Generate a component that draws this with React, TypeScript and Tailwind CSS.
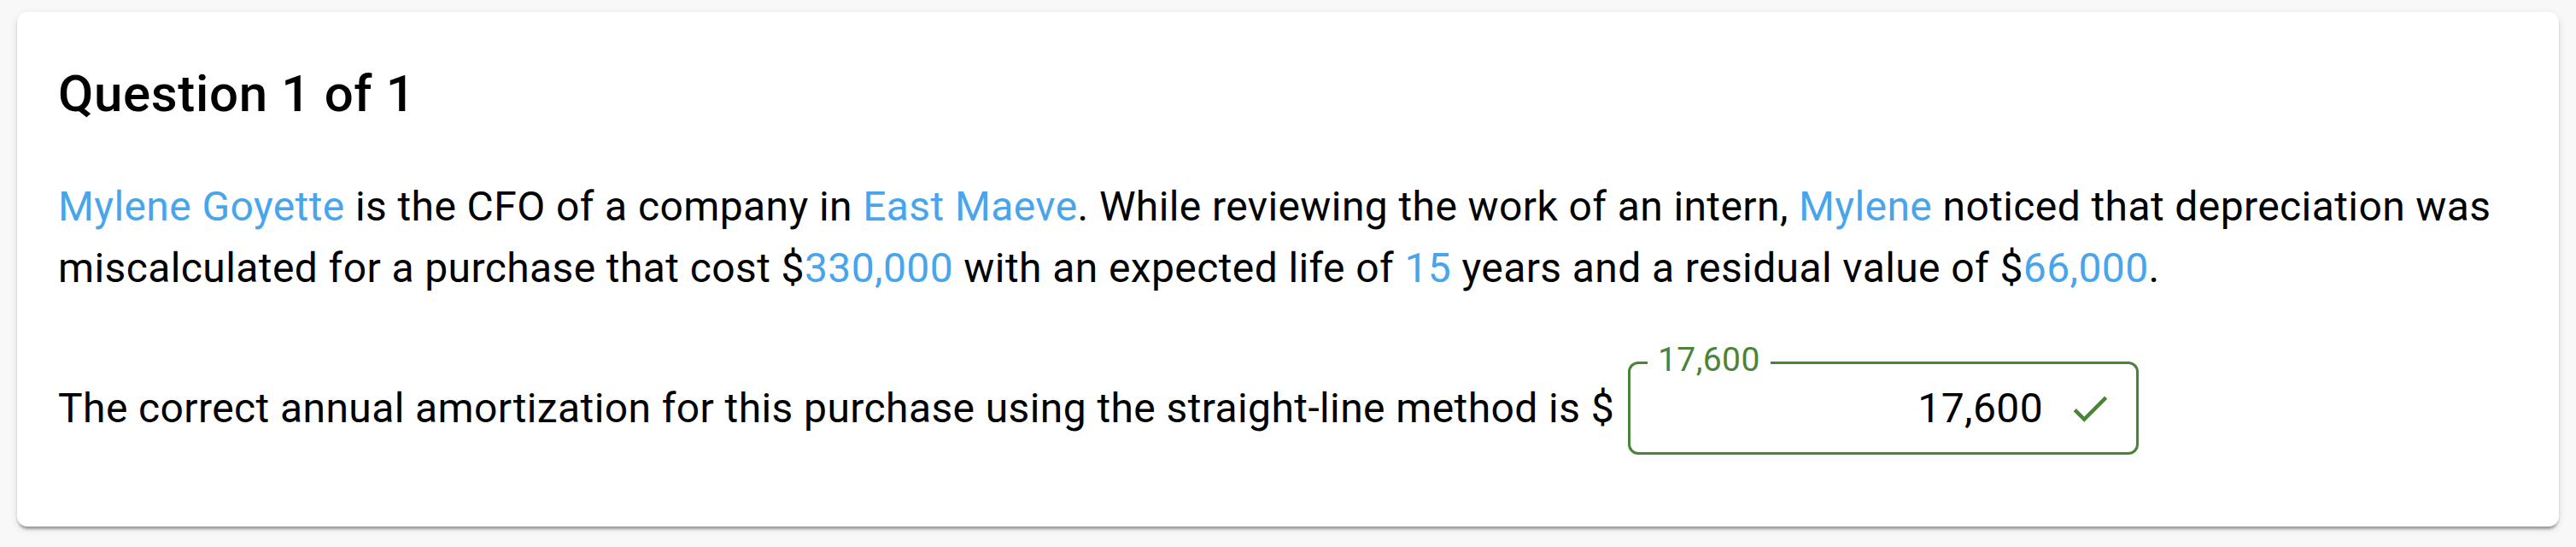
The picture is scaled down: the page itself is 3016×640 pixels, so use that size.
import React from 'react';

const Hl: React.FC<{ children: React.ReactNode }> = ({ children }) => (
  <span className="text-[#48a5ec]">{children}</span>
);

const CheckIcon = () => (
  <svg viewBox="0 0 24 24" className="h-[54px] w-[54px] shrink-0" fill="#4a8439">
    <path d="M9 16.17 4.83 12l-1.42 1.41L9 19 21 7l-1.41-1.41z" />
  </svg>
);

const AnswerField: React.FC<{ value: string }> = ({ value }) => (
  <div className="relative flex h-[109px] w-[598px] shrink-0 items-center justify-end gap-[28px] rounded-[12px] border-[3px] border-[#4a8439] pr-[27px]">
    <span className="absolute -top-[24px] left-[20px] bg-white px-[12px] text-[39px] leading-[39px] text-[#4a8439]">
      {value}
    </span>
    <span className="text-[48px] leading-[72px] text-black">{value}</span>
    <CheckIcon />
  </div>
);

export default function App() {
  return (
    <div className="min-h-screen bg-[#f8f8f8] px-[20px] pt-[14px] font-[Roboto,sans-serif] text-black">
      <div className="rounded-[12px] bg-white px-12 pt-12 pb-[84px] tracking-[0.025em] shadow-[0_6px_3px_-3px_rgba(0,0,0,0.2),0_3px_3px_0_rgba(0,0,0,0.14),0_3px_9px_0_rgba(0,0,0,0.12)]">
        <h2 className="mb-12 text-[60px] leading-[96px] font-medium tracking-[0.011em]">Question 1 of 1</h2>
        <p className="text-[48px] leading-[72px]">
          <Hl>Mylene Goyette</Hl> is the CFO of a company in <Hl>East Maeve</Hl>. While reviewing the
          work of an intern, <Hl>Mylene</Hl> noticed that depreciation was miscalculated for a purchase
          that cost $<Hl>330,000</Hl> with an expected life of <Hl>15</Hl> years and a residual value of
          $<Hl>66,000</Hl>.
        </p>
        <div className="mt-[73px] flex items-center gap-4">
          <span className="text-[48px] leading-[72px]">
            The correct annual amortization for this purchase using the straight-line method is $
          </span>
          <AnswerField value="17,600" />
        </div>
      </div>
    </div>
  );
}
